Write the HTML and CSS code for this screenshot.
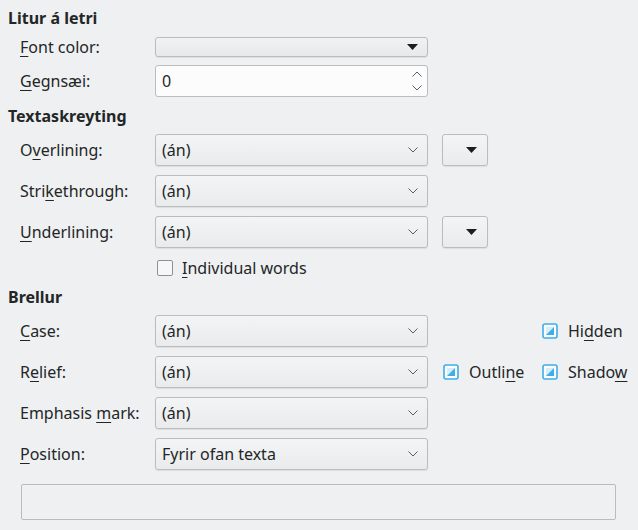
FILE: index.html
```html
<!DOCTYPE html>
<html lang="is">
<head>
    <meta charset="UTF-8">
    <title>Leturbrellur</title>
    <link rel="stylesheet" href="styles.css">
</head>
<body>
    <div class="page">
        <div class="section-title first">Litur á letri</div>

        <div class="row row-short">
            <label class="label"><u>F</u>ont color:</label>
            <button class="color-button">
                <svg class="tri" width="11" height="6" viewBox="0 0 11 6"><polygon points="0,0 11,0 5.5,6" /></svg>
            </button>
        </div>

        <div class="row spin-row">
            <label class="label"><u>G</u>egnsæi:</label>
            <div class="spinbox">
                <span>0</span>
                <svg class="spin-arrows" width="12" height="22" viewBox="0 0 12 22">
                    <polyline points="1.5,6.5 6,2 10.5,6.5" />
                    <polyline points="1.5,15.5 6,20 10.5,15.5" />
                </svg>
            </div>
        </div>

        <div class="section-title">Textaskreyting</div>

        <div class="row">
            <label class="label">O<u>v</u>erlining:</label>
            <div class="combo"><span>(án)</span><svg class="chevron" width="10" height="6" viewBox="0 0 10 6"><polyline points="0.5,0.5 5,5 9.5,0.5" /></svg></div>
            <button class="small-button">
                <svg class="tri" width="11" height="6" viewBox="0 0 11 6"><polygon points="0,0 11,0 5.5,6" /></svg>
            </button>
        </div>

        <div class="row">
            <label class="label">Stri<u>k</u>ethrough:</label>
            <div class="combo"><span>(án)</span><svg class="chevron" width="10" height="6" viewBox="0 0 10 6"><polyline points="0.5,0.5 5,5 9.5,0.5" /></svg></div>
        </div>

        <div class="row">
            <label class="label"><u>U</u>nderlining:</label>
            <div class="combo"><span>(án)</span><svg class="chevron" width="10" height="6" viewBox="0 0 10 6"><polyline points="0.5,0.5 5,5 9.5,0.5" /></svg></div>
            <button class="small-button">
                <svg class="tri" width="11" height="6" viewBox="0 0 11 6"><polygon points="0,0 11,0 5.5,6" /></svg>
            </button>
        </div>

        <div class="row check-row">
            <span class="check"></span>
            <span class="check-text"><u>I</u>ndividual words</span>
        </div>

        <div class="section-title">Brellur</div>

        <div class="row">
            <label class="label"><u>C</u>ase:</label>
            <div class="combo"><span>(án)</span><svg class="chevron" width="10" height="6" viewBox="0 0 10 6"><polyline points="0.5,0.5 5,5 9.5,0.5" /></svg></div>
            <div class="extras">
                <span class="slot"></span>
                <span class="slot">
                    <svg class="partial" width="16" height="16" viewBox="0 0 16 16"><rect class="box" x="1" y="1" width="14" height="14" rx="2" /><rect class="inner" x="4" y="4" width="8" height="8" /><polygon points="12,4 12,12 4,12" /></svg>
                    <span>Hi<u>d</u>den</span>
                </span>
            </div>
        </div>

        <div class="row">
            <label class="label">R<u>e</u>lief:</label>
            <div class="combo"><span>(án)</span><svg class="chevron" width="10" height="6" viewBox="0 0 10 6"><polyline points="0.5,0.5 5,5 9.5,0.5" /></svg></div>
            <div class="extras">
                <span class="slot">
                    <svg class="partial" width="16" height="16" viewBox="0 0 16 16"><rect class="box" x="1" y="1" width="14" height="14" rx="2" /><rect class="inner" x="4" y="4" width="8" height="8" /><polygon points="12,4 12,12 4,12" /></svg>
                    <span>Outli<u>n</u>e</span>
                </span>
                <span class="slot">
                    <svg class="partial" width="16" height="16" viewBox="0 0 16 16"><rect class="box" x="1" y="1" width="14" height="14" rx="2" /><rect class="inner" x="4" y="4" width="8" height="8" /><polygon points="12,4 12,12 4,12" /></svg>
                    <span>Shado<u>w</u></span>
                </span>
            </div>
        </div>

        <div class="row">
            <label class="label">Emphasis <u>m</u>ark:</label>
            <div class="combo"><span>(án)</span><svg class="chevron" width="10" height="6" viewBox="0 0 10 6"><polyline points="0.5,0.5 5,5 9.5,0.5" /></svg></div>
        </div>

        <div class="row">
            <label class="label"><u>P</u>osition:</label>
            <div class="combo"><span>Fyrir ofan texta</span><svg class="chevron" width="10" height="6" viewBox="0 0 10 6"><polyline points="0.5,0.5 5,5 9.5,0.5" /></svg></div>
        </div>

        <div class="preview"></div>
    </div>
</body>
</html>
```

FILE: styles.css
```css
body {
    margin: 0;
    padding: 0;
    background: #eff0f1;
    color: #232627;
    font-family: "Noto Sans", "DejaVu Sans", sans-serif;
    font-size: 16px;
}

.page {
    display: flex;
    flex-direction: column;
    padding: 8px 0 0 8px;
}

u {
    text-decoration-thickness: 1px;
    text-underline-offset: 3px;
}

.section-title {
    height: 20px;
    line-height: 20px;
    font-weight: bold;
    margin-top: 9px;
    margin-bottom: -1px;
}

.section-title.first {
    margin-top: 0;
    margin-bottom: 0;
}

.row {
    display: flex;
    align-items: center;
    height: 32px;
    margin-top: 9px;
    padding-left: 12px;
}

.row-short {
    height: 20px;
}

.spin-row {
    margin-top: 8px;
}

.label {
    width: 135px;
    flex: none;
}

.combo,
.spinbox,
.color-button {
    box-sizing: border-box;
    flex: none;
    width: 273px;
    height: 32px;
    border: 1px solid #babcbd;
    border-radius: 3px;
    display: flex;
    align-items: center;
    justify-content: space-between;
    padding: 0 8px 0 6px;
    font: inherit;
    color: inherit;
}

.combo {
    background: linear-gradient(#f3f4f5, #eaebec);
    box-shadow: 0 1px 1px rgba(0, 0, 0, 0.08);
}

.chevron {
    margin-right: 1px;
}

.chevron polyline,
.spin-arrows polyline {
    fill: none;
    stroke: #5b5d5f;
    stroke-width: 1;
}

.spinbox {
    background: #fcfcfc;
    padding-right: 4px;
}

.color-button {
    height: 20px;
    justify-content: flex-end;
    padding-right: 9px;
    background: linear-gradient(#f1f2f3, #e8e9ea);
    box-shadow: 0 1px 1px rgba(0, 0, 0, 0.08);
}

.tri polygon {
    fill: #1b1d1e;
}

.small-button {
    box-sizing: border-box;
    flex: none;
    width: 46px;
    height: 32px;
    margin-left: 14px;
    border: 1px solid #babcbd;
    border-radius: 3px;
    background: linear-gradient(#f3f4f5, #eaebec);
    box-shadow: 0 1px 1px rgba(0, 0, 0, 0.08);
    display: flex;
    align-items: center;
    justify-content: flex-end;
    padding: 0 10px 0 0;
}

.check-row {
    height: 21px;
    padding-left: 149px;
}

.check {
    box-sizing: border-box;
    width: 16px;
    height: 16px;
    border: 1px solid #8f9193;
    border-radius: 2px;
    background: #f6f7f7;
}

.check-text {
    margin-left: 9px;
}

.extras {
    display: flex;
    margin-left: 15px;
}

.slot {
    display: flex;
    align-items: center;
    width: 99px;
}

.slot svg {
    margin-right: 10px;
}

.partial .box {
    fill: #fcfcfc;
    stroke: #3daee9;
    stroke-width: 1.6;
}

.partial .inner {
    fill: #d6edfa;
}

.partial polygon {
    fill: #3daee9;
}

.preview {
    box-sizing: border-box;
    margin: 14px 22px 0 13px;
    height: 36px;
    border: 1px solid #b9bbbc;
    border-radius: 2px;
    background: #eff0f1;
}
```
